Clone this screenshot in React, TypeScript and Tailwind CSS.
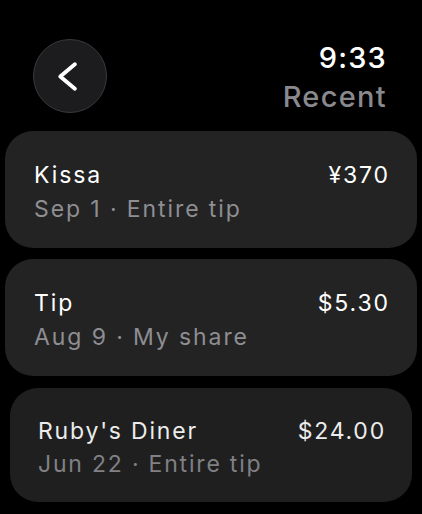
const tips = [
    { name: 'Kissa', amount: '¥370', date: 'Sep 1', share: 'Entire tip' },
    { name: 'Tip', amount: '$5.30', date: 'Aug 9', share: 'My share' },
]

function BackChevron() {
    return (
        <svg width="74" height="74" viewBox="0 0 74 74" fill="none">
            <polyline
                points="42,25 27,37.5 42,50"
                stroke="white"
                strokeWidth="4"
                strokeLinecap="round"
                strokeLinejoin="round"
            />
        </svg>
    )
}

export default function App() {
    return (
        <div
            className="w-[422px] h-[514px] bg-black overflow-hidden text-white"
            style={{ fontFamily: 'Inter, "Noto Sans", sans-serif' }}
        >
            {/* Header */}
            <div className="flex items-start justify-between pl-[33px] pr-[35px] pt-[39px]">
                <button className="w-[74px] h-[74px] rounded-full bg-[#1c1c1e] border border-[#3a3a3c] flex items-center justify-center overflow-hidden">
                    <BackChevron />
                </button>
                <div className="flex flex-col items-end pt-[2px]">
                    <span className="text-[29px] leading-[34px] font-medium tracking-[1.2px]">9:33</span>
                    <span className="text-[29px] leading-[36px] font-medium text-[#8a8a8e] tracking-[1.3px] mt-[4px]">Recent</span>
                </div>
            </div>

            {/* List */}
            <div className="flex flex-col gap-[11px] px-[5px] mt-[16px]">
                {tips.map((t) => (
                    <div key={t.name} className="h-[117px] rounded-[28px] bg-[#232323] px-[29px] pt-[28px] tracking-[1.9px]">
                        <div className="flex justify-between text-[23px] leading-[32px]">
                            <span>{t.name}</span>
                            <span className="-mr-[2px]">{t.amount}</span>
                        </div>
                        <div className="text-[23px] leading-[32px] text-[#8e8e93] mt-[2px]">
                            {t.date} · {t.share}
                        </div>
                    </div>
                ))}
                <div className="mx-[5px] h-[114px] rounded-[28px] bg-[#1f1f1f] px-[28px] pt-[27px] mt-[1px] tracking-[1.8px]">
                    <div className="flex justify-between text-[23px] leading-[32px] text-[#ececec]">
                        <span>Ruby's Diner</span>
                        <span className="-mr-[2px]">$24.00</span>
                    </div>
                    <div className="text-[23px] leading-[32px] text-[#808085] mt-[1px]">
                        Jun 22 · Entire tip
                    </div>
                </div>
            </div>
        </div>
    )
}
